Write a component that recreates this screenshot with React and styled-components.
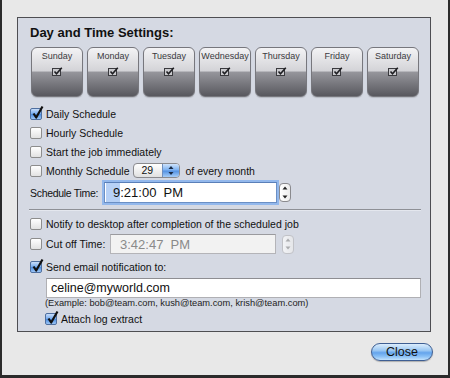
import React from 'react';
import styled, { createGlobalStyle } from 'styled-components';

const GlobalStyle = createGlobalStyle`
  body {
    margin: 0;
    font-family: "Liberation Sans", Arial, sans-serif;
    color: #111;
  }
`;

const DAYS = ['Sunday', 'Monday', 'Tuesday', 'Wednesday', 'Thursday', 'Friday', 'Saturday'];

const Window = styled.div`
  width: 450px;
  height: 378px;
  box-sizing: border-box;
  background: #e8e8e8;
  border-left: 2px solid #2b2b2b;
  border-right: 2px solid #2b2b2b;
  border-bottom: 3px solid #2b2b2b;
  padding: 17px 0 0 15px;
  display: flex;
  flex-direction: column;
`;

const Panel = styled.div`
  width: 414px;
  height: 315px;
  box-sizing: border-box;
  border: 1px solid #4e4e52;
  background: #d5d9e3;
  padding: 7px 9px 0 12px;
  font-size: 10.5px;
`;

const Title = styled.div`
  font-size: 13px;
  font-weight: bold;
  line-height: 16px;
  color: #111;
`;

const DayRow = styled.div`
  display: flex;
  gap: 4px;
  margin: 6px 0 0 1px;
`;

const DayButton = styled.div`
  width: 52px;
  height: 50px;
  box-sizing: border-box;
  border: 1px solid #77777d;
  border-radius: 6px;
  background: linear-gradient(to bottom, #f3f3f5 0%, #d3d3d7 48%, #96969c 50%, #77777d 75%, #58585e 100%);
  display: flex;
  flex-direction: column;
  align-items: center;
  padding-top: 3px;
  box-shadow: 0 1px 1px rgba(0, 0, 0, 0.15);
`;

const DayLabel = styled.span`
  font-size: 9px;
  line-height: 11px;
  color: #3a3a3e;
`;

const DayIcon = styled.svg`
  margin-top: 5px;
`;

const Rows = styled.div`
  margin-top: ${p => p.$top || 0}px;
`;

const Row = styled.div`
  display: flex;
  align-items: center;
  height: ${p => p.$h || 19}px;
  margin-top: ${p => p.$mt || 0}px;
  margin-left: ${p => p.$ml || 0}px;
  gap: ${p => (p.$gap === undefined ? 4 : p.$gap)}px;
`;

const Box = styled.span`
  position: relative;
  width: 12px;
  height: 12px;
  box-sizing: border-box;
  flex: none;
  border: 1px solid ${p => (p.$on ? '#4f6f9f' : '#8d8d8d')};
  border-radius: 2px;
  background: ${p =>
    p.$on
      ? 'linear-gradient(to bottom, #c9defa 0%, #7aaef0 45%, #4f8fe2 55%, #9cc6f6 100%)'
      : 'linear-gradient(to bottom, #ffffff 0%, #f1f1f1 50%, #e2e2e2 100%)'};
`;

const Tick = styled.svg`
  position: absolute;
  left: 0px;
  top: -4px;
`;

const Label = styled.span`
  color: #111;
  white-space: nowrap;
  width: ${p => (p.$w ? `${p.$w}px` : 'auto')};
  letter-spacing: ${p => p.$ls || 0}px;
`;

const Select = styled.div`
  width: 47px;
  height: 15px;
  box-sizing: border-box;
  border: 1px solid #8a8a8e;
  border-radius: 4px;
  display: flex;
  overflow: hidden;
  margin-right: 1px;
  background: linear-gradient(to bottom, #ffffff 0%, #f0f0f0 50%, #e0e0e0 100%);
`;

const SelectValue = styled.span`
  flex: 1;
  padding-left: 7px;
  font-size: 10.5px;
  line-height: 13px;
`;

const SelectArrows = styled.span`
  width: 16px;
  display: flex;
  align-items: center;
  justify-content: center;
  background: linear-gradient(to bottom, #cfe3fb 0%, #7eb2f1 45%, #5593e3 55%, #a6cdf7 100%);
  border-left: 1px solid #6f8fbe;
`;

const TimeField = styled.div`
  height: ${p => p.$h}px;
  width: ${p => p.$w}px;
  box-sizing: border-box;
  margin-left: ${p => p.$ml || 0}px;
  border: 1px solid ${p => (p.$focus ? '#6b8fc4' : '#b4b4b8')};
  border-top-color: ${p => (p.$focus ? '#5a7fb8' : '#9a9a9e')};
  background: ${p => (p.$disabled ? '#f2f2f2' : '#fff')};
  box-shadow: ${p => (p.$focus ? '0 0 0 2px #93b8ec' : 'none')};
  display: flex;
  align-items: center;
  padding-left: ${p => p.$pl || 8}px;
  font-size: 13px;
  color: ${p => (p.$disabled ? '#8a8a8a' : '#111')};
  white-space: pre;
`;

const Caret = styled.span`
  background: #b7d1f6;
  padding: 2px 0 2px 7px;
  margin-left: -7px;
`;

const Stepper = styled.div`
  width: 12px;
  height: 19px;
  box-sizing: border-box;
  margin-left: 2px;
  border: 1px solid ${p => (p.$disabled ? '#b9b9bc' : '#8a8a8e')};
  border-radius: 4px;
  background: linear-gradient(to right, #ffffff 0%, #ececec 100%);
  display: flex;
  flex-direction: column;
  align-items: center;
  justify-content: space-around;
  opacity: ${p => (p.$disabled ? 0.7 : 1)};
`;

const Separator = styled.div`
  height: 1px;
  background: #8e9096;
  border-bottom: 1px solid #e4e7ee;
  margin: 6px 0 0 -1px;
  width: 392px;
`;

const EmailField = styled.div`
  width: 375px;
  height: 20px;
  box-sizing: border-box;
  margin: 2px 0 0 16px;
  border: 1px solid #b0b0b4;
  border-top-color: #8e8e92;
  background: #fff;
  font-size: 12.5px;
  line-height: 18px;
  padding-left: 4px;
`;

const Hint = styled.div`
  margin-left: 15px;
  font-size: 9.3px;
  line-height: 10px;
  color: #222;
`;

const Footer = styled.div`
  display: flex;
  justify-content: flex-end;
  padding-right: 15px;
  margin-top: 11px;
`;

const CloseButton = styled.button`
  width: 62px;
  height: 18px;
  border-radius: 9px;
  border: 1px solid #3f5f93;
  background: linear-gradient(to bottom, #dcedfc 0%, #9cc8f3 40%, #64a4ec 55%, #8ec3f6 80%, #c3e3fd 100%);
  font-family: "Liberation Sans", Arial, sans-serif;
  font-size: 12.5px;
  color: #111;
  padding: 0;
  box-shadow: 0 1px 1px rgba(0, 0, 0, 0.25);
`;

const Check = ({ on }) => (
  <Box $on={on}>
    {on && (
      <Tick width="14" height="15" viewBox="0 0 14 15">
        <path d="M2.5 8.5 L5.2 12.5 L11.5 1.5" fill="none" stroke="#111" strokeWidth="2.2" strokeLinejoin="round" />
      </Tick>
    )}
  </Box>
);

const Arrows = ({ color = '#222' }) => (
  <svg width="6" height="11" viewBox="0 0 6 11">
    <path d="M0.5 4 L3 1 L5.5 4 Z" fill={color} />
    <path d="M0.5 7 L3 10 L5.5 7 Z" fill={color} />
  </svg>
);

const Spin = ({ disabled }) => (
  <Stepper $disabled={disabled}>
    <svg width="6" height="4" viewBox="0 0 6 4"><path d="M0.5 3.5 L3 0.5 L5.5 3.5 Z" fill={disabled ? '#999' : '#222'} /></svg>
    <svg width="6" height="4" viewBox="0 0 6 4"><path d="M0.5 0.5 L3 3.5 L5.5 0.5 Z" fill={disabled ? '#999' : '#222'} /></svg>
  </Stepper>
);

export default function App() {
  return (
    <Window>
      <GlobalStyle />
      <Panel>
        <Title>Day and Time Settings:</Title>
        <DayRow>
          {DAYS.map(d => (
            <DayButton key={d}>
              <DayLabel>{d}</DayLabel>
              <DayIcon width="11" height="9" viewBox="0 0 11 9">
                <rect x="0.5" y="1.5" width="8" height="7" fill="#c9c9cd" stroke="#3a3a3e" />
                <path d="M2.5 4.5 L4.5 6.8 L9.8 0.8" fill="none" stroke="#1e1e22" strokeWidth="1.6" />
              </DayIcon>
            </DayButton>
          ))}
        </DayRow>

        <Rows $top={7}>
          <Row><Check on /><Label>Daily Schedule</Label></Row>
          <Row><Check /><Label>Hourly Schedule</Label></Row>
          <Row><Check /><Label>Start the job immediately</Label></Row>
          <Row>
            <Check />
            <Label>Monthly Schedule</Label>
            <Select>
              <SelectValue>29</SelectValue>
              <SelectArrows><Arrows color="#1a2a44" /></SelectArrows>
            </Select>
            <Label>of every month</Label>
          </Row>
          <Row $h={21} $mt={2} $gap={0}>
            <Label $w={74} $ls={-0.3}>Schedule Time:</Label>
            <TimeField $w={173} $h={21} $focus>
              <Caret>9</Caret>:21:00  PM
            </TimeField>
            <Spin />
          </Row>
        </Rows>

        <Separator />

        <Row $mt={3}><Check /><Label>Notify to desktop after completion of the scheduled job</Label></Row>
        <Row $h={20} $mt={1}>
          <Check />
          <Label $w={60}>Cut off Time:</Label>
          <TimeField $w={166} $h={20} $disabled $pl={9}>3:42:47  PM</TimeField>
          <Spin disabled />
        </Row>
        <Row $mt={3}><Check on /><Label>Send email notification to:</Label></Row>
        <EmailField>celine@myworld.com</EmailField>
        <Hint>(Example: bob@team.com, kush@team.com, krish@team.com)</Hint>
        <Row $mt={1} $ml={15}><Check on /><Label>Attach log extract</Label></Row>
      </Panel>
      <Footer>
        <CloseButton>Close</CloseButton>
      </Footer>
    </Window>
  );
}
